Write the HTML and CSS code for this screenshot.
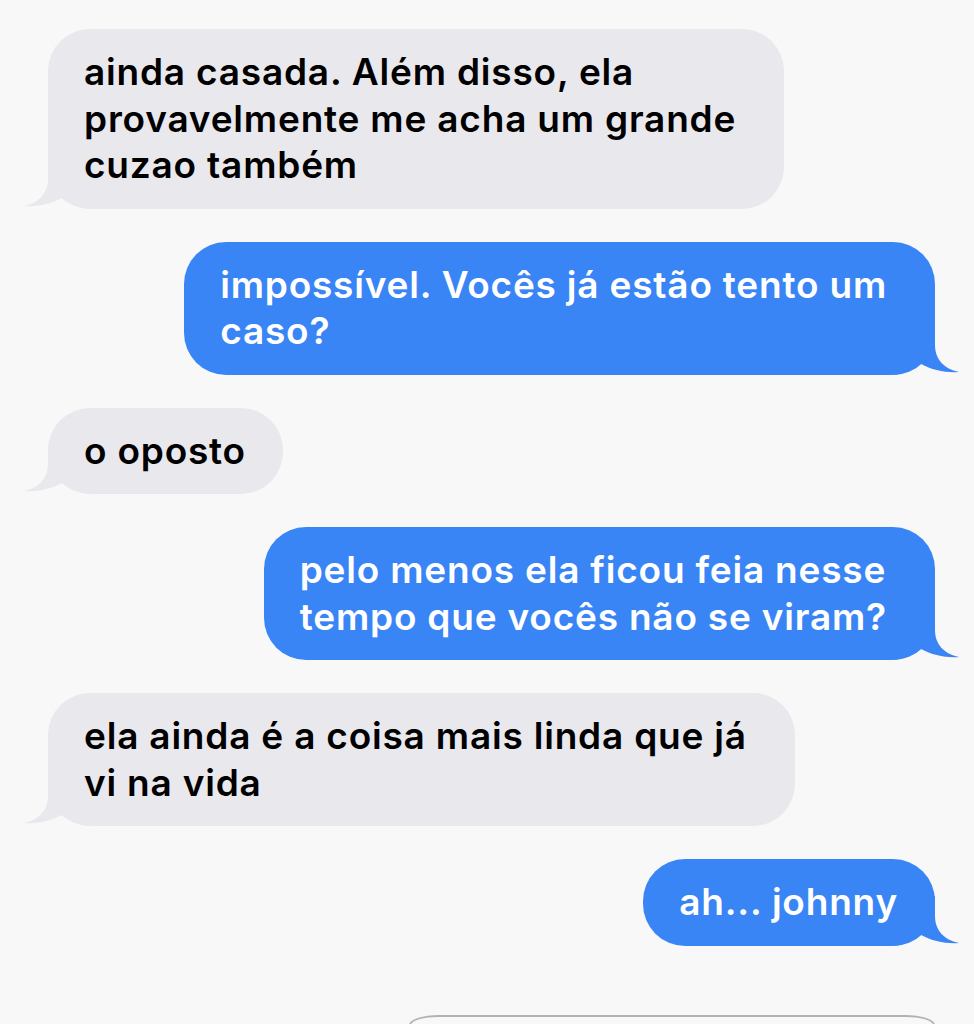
FILE: index.html
```html
<!DOCTYPE html>
<html lang="pt">
<head>
    <meta charset="UTF-8">
    <meta name="viewport" content="width=device-width, initial-scale=1.0">
    <title>Mensagens</title>
    <link rel="stylesheet" href="styles.css">
</head>
<body>
    <div class="thread">
        <div class="msg them">
            <div class="bubble multi">ainda casada. Além disso, ela<br>provavelmente me acha um grande<br>cuzao também
                <svg class="tail" viewBox="0 0 65 50"><path d="M25 0 L25 20 C25 34 16 44 1 47 C14 48 28 45 39 39 C46 44 55 48 65 50 L65 0 Z"/></svg>
            </div>
        </div>
        <div class="msg me">
            <div class="bubble multi">impossível. Vocês já estão tento um<br>caso?
                <svg class="tail" viewBox="0 0 65 50"><path d="M25 0 L25 20 C25 34 16 44 1 47 C14 48 28 45 39 39 C46 44 55 48 65 50 L65 0 Z"/></svg>
            </div>
        </div>
        <div class="msg them">
            <div class="bubble">o oposto
                <svg class="tail" viewBox="0 0 65 50"><path d="M25 0 L25 20 C25 34 16 44 1 47 C14 48 28 45 39 39 C46 44 55 48 65 50 L65 0 Z"/></svg>
            </div>
        </div>
        <div class="msg me">
            <div class="bubble multi">pelo menos ela ficou feia nesse<br>tempo que vocês não se viram?
                <svg class="tail" viewBox="0 0 65 50"><path d="M25 0 L25 20 C25 34 16 44 1 47 C14 48 28 45 39 39 C46 44 55 48 65 50 L65 0 Z"/></svg>
            </div>
        </div>
        <div class="msg them">
            <div class="bubble multi">ela ainda é a coisa mais linda que já<br>vi na vida
                <svg class="tail" viewBox="0 0 65 50"><path d="M25 0 L25 20 C25 34 16 44 1 47 C14 48 28 45 39 39 C46 44 55 48 65 50 L65 0 Z"/></svg>
            </div>
        </div>
        <div class="msg me">
            <div class="bubble">ah... johnny
                <svg class="tail" viewBox="0 0 65 50"><path d="M25 0 L25 20 C25 34 16 44 1 47 C14 48 28 45 39 39 C46 44 55 48 65 50 L65 0 Z"/></svg>
            </div>
        </div>
    </div>

    <div class="composer">
        <div class="field"></div>
    </div>
</body>
</html>
```

FILE: styles.css
```css
/* Conversa estilo iMessage */
html, body {
    height: 1024px;
    overflow: hidden;
}

body {
    margin: 0;
    background-color: #f8f8f8;
    font-family: Inter, "Noto Sans", sans-serif;
    font-size: 37px;
    font-weight: 600;
    letter-spacing: 0.8px;
    line-height: 46.5px;
}

.thread {
    display: flex;
    flex-direction: column;
    gap: 33px;
    padding: 29px 39px 0 48px;
}

.msg {
    display: flex;
}

.msg.me {
    justify-content: flex-end;
}

.bubble {
    position: relative;
    z-index: 0;
    padding: 20px 37px 20px 36px;
    border-radius: 42px;
}

/* burbujas de varias líneas dejan más aire a la derecha */
.bubble.multi {
    padding-right: 48px;
}

.them .bubble {
    background-color: #e9e8ed;
    color: #000;
}

.me .bubble {
    background-color: #3a85f5;
    color: #fff;
}

/* Colita de la burbuja, detrás del texto */
.tail {
    position: absolute;
    z-index: -1;
    bottom: 0;
    width: 65px;
    height: 50px;
}

.them .tail {
    left: -25px;
    fill: #e9e8ed;
}

.me .tail {
    right: -25px;
    fill: #3a85f5;
    transform: scaleX(-1);
}

/* Barra de entrada abajo */
.composer {
    display: flex;
    justify-content: flex-end;
    padding: 69px 39px 0 0;
}

.field {
    width: 522px;
    height: 10px;
    border: 2px solid #b2b2b2;
    border-bottom: none;
    border-radius: 30px 30px 0 0 / 10px 10px 0 0;
}
```
